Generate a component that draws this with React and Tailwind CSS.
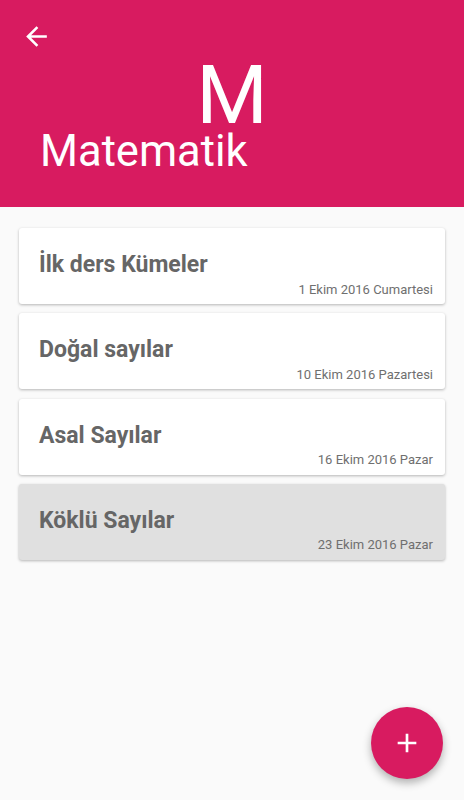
import React from "react";

const items = [
  { title: "İlk ders Kümeler", date: "1 Ekim 2016 Cumartesi", active: false },
  { title: "Doğal sayılar", date: "10 Ekim 2016 Pazartesi", active: false },
  { title: "Asal Sayılar", date: "16 Ekim 2016 Pazar", active: false },
  { title: "Köklü Sayılar", date: "23 Ekim 2016 Pazar", active: true },
];

export default function App() {
  return (
    <div
      className="relative w-full h-[800px] overflow-hidden bg-[#FAFAFA]"
      style={{ fontFamily: "Roboto, 'Noto Sans', sans-serif" }}
    >
      <header className="h-[207px] bg-[#D81B60] flex flex-col text-white">
        <div className="h-[58.75px] pl-[21px] pt-[21px]">
          <svg width="31" height="31" viewBox="0 0 24 24" fill="white">
            <path d="M20 11H7.83l5.59-5.59L12 4l-8 8 8 8 1.41-1.41L7.83 13H20v-2z" />
          </svg>
        </div>
        <div className="text-[82px] leading-[73px] text-center font-normal">M</div>
        <div className="text-[43.5px] leading-[40px] pl-[40px] font-normal">Matematik</div>
      </header>

      <main className="flex flex-col gap-[9.33px] px-[19px] pt-[21px]">
        {items.map((it) => (
          <div
            key={it.title}
            className={`h-[76px] rounded-[3px] flex flex-col shadow-[0_1px_3px_rgba(0,0,0,0.28)] ${
              it.active ? "bg-[#E0E0E0]" : "bg-white"
            }`}
          >
            <div className="pt-[26px] pl-[20px] text-[23px] leading-[22px] font-bold text-[#666666]">
              {it.title}
            </div>
            <div className="mt-[6.5px] pr-[12px] self-end text-[13px] leading-[13px] text-[#6f6f6f]">
              {it.date}
            </div>
          </div>
        ))}
      </main>

      <button className="absolute right-[21px] bottom-[21px] w-[72px] h-[72px] rounded-full bg-[#D81B60] flex items-center justify-center shadow-[0_4px_8px_rgba(0,0,0,0.3)]">
        <svg width="32" height="32" viewBox="0 0 24 24" fill="white">
          <path d="M19 13h-6v6h-2v-6H5v-2h6V5h2v6h6v2z" />
        </svg>
      </button>
    </div>
  );
}
